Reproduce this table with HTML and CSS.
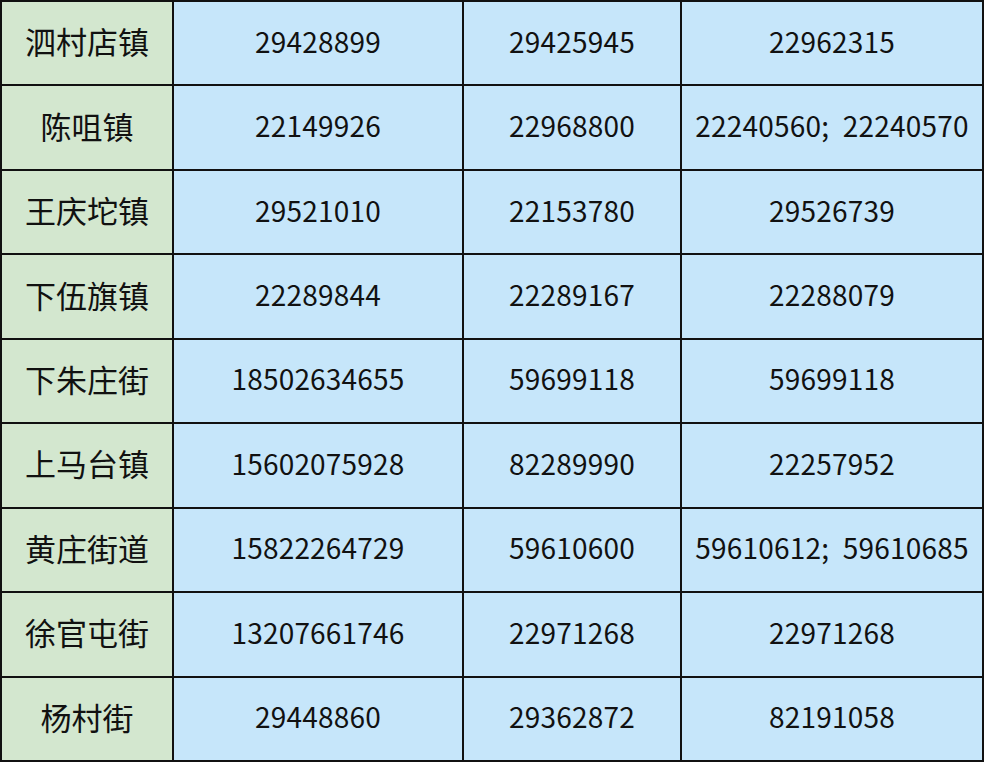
FILE: index.html
```html
<!DOCTYPE html>
<html lang="zh">
<head>
<meta charset="utf-8">
<link rel="stylesheet" href="styles.css">
</head>
<body>
<div class="grid">
  <div class="name">泗村店镇</div><div class="num">29428899</div><div class="num">29425945</div><div class="num">22962315</div>
  <div class="name">陈咀镇</div><div class="num">22149926</div><div class="num">22968800</div><div class="num">22240560; 22240570</div>
  <div class="name">王庆坨镇</div><div class="num">29521010</div><div class="num">22153780</div><div class="num">29526739</div>
  <div class="name">下伍旗镇</div><div class="num">22289844</div><div class="num">22289167</div><div class="num">22288079</div>
  <div class="name">下朱庄街</div><div class="num">18502634655</div><div class="num">59699118</div><div class="num">59699118</div>
  <div class="name">上马台镇</div><div class="num">15602075928</div><div class="num">82289990</div><div class="num">22257952</div>
  <div class="name">黄庄街道</div><div class="num">15822264729</div><div class="num">59610600</div><div class="num">59610612; 59610685</div>
  <div class="name">徐官屯街</div><div class="num">13207661746</div><div class="num">22971268</div><div class="num">22971268</div>
  <div class="name">杨村街</div><div class="num">29448860</div><div class="num">29362872</div><div class="num">82191058</div>
</div>
</body>
</html>
```
FILE: styles.css
```css
html, body {
  margin: 0;
  padding: 0;
  background: #ffffff;
}
.grid {
  width: 984px;
  height: 762px;
  box-sizing: border-box;
  padding: 2px;
  gap: 2px;
  background: #111111;
  display: grid;
  grid-template-columns: 170px 288px 216px 300px;
  grid-template-rows: repeat(9, 1fr);
  font-family: "Noto Sans CJK SC", "Noto Sans", sans-serif;
  color: #111111;
}
.grid > div {
  display: flex;
  align-items: center;
  justify-content: center;
  white-space: nowrap;
  padding-bottom: 5px;
}
.name {
  background: #d3e7cf;
  font-size: 31px;
}
.num {
  background: #c6e6fa;
  font-size: 28px;
  letter-spacing: 0.2px;
  word-spacing: 7px;
}
```
